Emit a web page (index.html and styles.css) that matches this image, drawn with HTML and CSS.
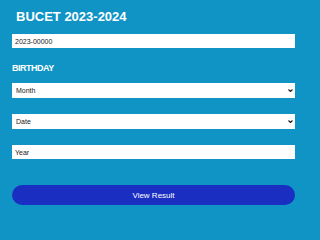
FILE: index.html
```html
<!DOCTYPE html>
<html>
<head>
<meta charset="utf-8">
<link rel="stylesheet" href="styles.css">
</head>
<body>
<form class="form">
  <h1 class="title">BUCET 2023-2024</h1>
  <input class="field roll" type="text" value="2023-00000">
  <label class="label">BIRTHDAY</label>
  <select class="field select month"><option>Month</option></select>
  <select class="field select date"><option>Date</option></select>
  <input class="field year" type="text" value="Year">
  <button class="btn" type="button">View Result</button>
</form>
</body>
</html>
```
FILE: styles.css
```css
html, body {
  margin: 0;
  padding: 0;
  background: #0f94c5;
  width: 300px;
  height: 210px;
  overflow: hidden;
}
.form {
  display: flex;
  flex-direction: column;
  padding: 0 5px 0 12px;
  font-family: "Liberation Sans", Arial, sans-serif;
}
.title {
  margin: 0;
  padding: 9px 0 0 4px;
  font-size: 13px;
  line-height: 15px;
  font-weight: bold;
  color: #fff;
}
.field {
  box-sizing: border-box;
  width: 100%;
  border: none;
  outline: none;
  background-color: #fff;
  color: #222;
  font-family: "Liberation Sans", Arial, sans-serif;
  font-size: 7px;
  margin: 0;
}
.roll {
  margin-top: 10px;
  height: 14px;
  padding: 0 3px;
}
.label {
  margin-top: 15px;
  font-size: 9px;
  line-height: 11px;
  font-weight: bold;
  letter-spacing: -0.5px;
  color: #fff;
}
.select {
  -webkit-appearance: none;
  appearance: none;
  height: 15px;
  padding: 0 10px 0 4px;
  border-radius: 0;
  background-image: url("data:image/svg+xml;utf8,<svg xmlns='http://www.w3.org/2000/svg' width='5' height='3' viewBox='0 0 5 3'><path d='M0.5 0.5 L2.5 2.5 L4.5 0.5' fill='none' stroke='%23222' stroke-width='1.2'/></svg>");
  background-repeat: no-repeat;
  background-position: right 2px center;
  background-size: 5px 3px;
}
.month {
  margin-top: 9px;
}
.date {
  margin-top: 16px;
}
.year {
  margin-top: 16px;
  height: 14px;
  padding: 0 3px;
}
.btn {
  margin-top: 26px;
  height: 20px;
  border: none;
  border-radius: 10px;
  background: #1a2fc2;
  color: #fff;
  font-family: "Liberation Sans", Arial, sans-serif;
  font-size: 8px;
  padding: 0;
}
```
